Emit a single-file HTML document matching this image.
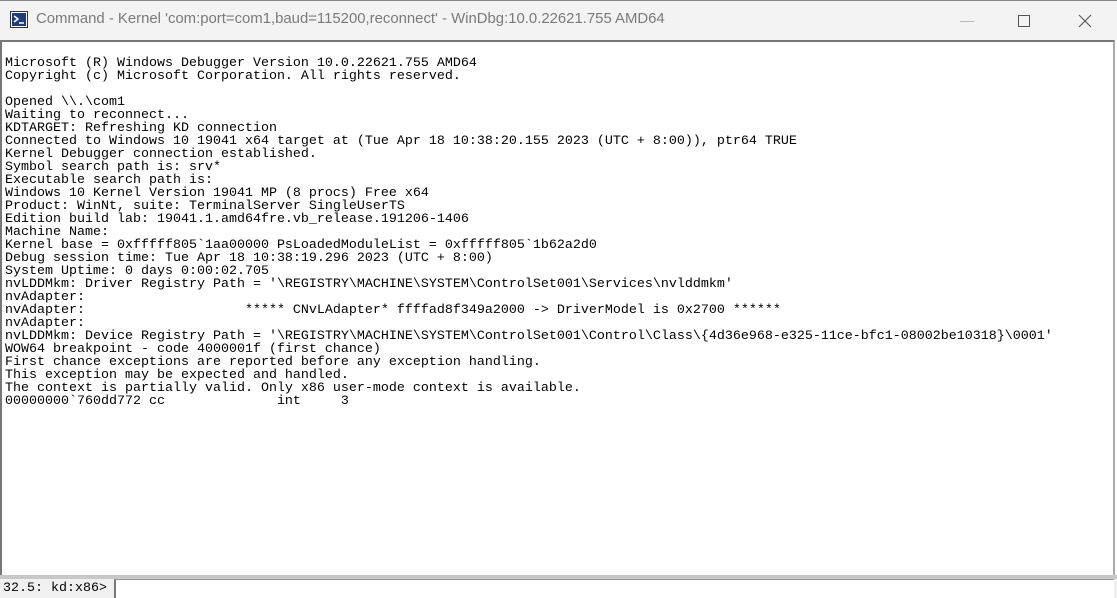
<!DOCTYPE html>
<html><head><style>
body{margin:0;width:1117px;height:598px;overflow:hidden;background:#fff;font-family:"Liberation Sans",sans-serif;position:relative}
#tb{position:absolute;left:0;top:0;width:1117px;height:40px;background:#f3f3f3;border-top:1px solid #888;box-sizing:border-box}
#title{position:absolute;left:36px;top:10px;font-size:14.9px;color:#7a7a7a;white-space:nowrap}
#ic{position:absolute;left:10px;top:10px;width:18px;height:17px;border:1px solid #333;background:#fff;box-sizing:border-box}
#ic svg{position:absolute;left:1px;top:1px}
#content{position:absolute;left:0;top:40px;width:1115px;height:535px;border-top:2px solid #777;border-left:2px solid #777;border-right:2px solid #aaa;box-sizing:border-box}
pre{position:absolute;left:5px;top:57px;margin:0;font-family:"Liberation Mono",monospace;font-size:13.33px;line-height:13px;color:#000}
#sep{position:absolute;left:0;top:575px;width:1117px;height:4px;background:#c8c8c8}
#sb{position:absolute;left:0;top:579px;width:1117px;height:19px;background:#f0f0f0}
#prompt{position:absolute;left:3px;top:581px;font-family:"Liberation Mono",monospace;font-size:13.33px;color:#000}
#inp{position:absolute;left:114px;top:579px;width:1000px;height:19px;background:#fff;border-left:2px solid #777;border-top:1px solid #999;box-sizing:border-box}
</style></head><body>
<div id="tb">
<div id="ic"><svg width="14" height="13"><rect width="14" height="13" fill="#1f3c78"/><path d="M2 3 L6 6 L2 9" stroke="#fff" stroke-width="1.6" fill="none"/><path d="M7 10 H12" stroke="#fff" stroke-width="1.5"/></svg></div>
<div id="title">Command - Kernel 'com:port=com1,baud=115200,reconnect' - WinDbg:10.0.22621.755 AMD64</div>
<svg style="position:absolute;left:955px;top:12px" width="150" height="16"><path d="M5 8.5H19" stroke="#bbb" stroke-width="1"/><rect x="63.5" y="2.5" width="11" height="11" fill="none" stroke="#555"/><path d="M124 2L136 14M136 2L124 14" stroke="#555" stroke-width="1.1"/></svg>
</div>
<div id="content"></div>
<pre>Microsoft (R) Windows Debugger Version 10.0.22621.755 AMD64
Copyright (c) Microsoft Corporation. All rights reserved.

Opened \\.\com1
Waiting to reconnect...
KDTARGET: Refreshing KD connection
Connected to Windows 10 19041 x64 target at (Tue Apr 18 10:38:20.155 2023 (UTC + 8:00)), ptr64 TRUE
Kernel Debugger connection established.
Symbol search path is: srv*
Executable search path is:
Windows 10 Kernel Version 19041 MP (8 procs) Free x64
Product: WinNt, suite: TerminalServer SingleUserTS
Edition build lab: 19041.1.amd64fre.vb_release.191206-1406
Machine Name:
Kernel base = 0xfffff805`1aa00000 PsLoadedModuleList = 0xfffff805`1b62a2d0
Debug session time: Tue Apr 18 10:38:19.296 2023 (UTC + 8:00)
System Uptime: 0 days 0:00:02.705
nvLDDMkm: Driver Registry Path = '\REGISTRY\MACHINE\SYSTEM\ControlSet001\Services\nvlddmkm'
nvAdapter:
nvAdapter:                    ***** CNvLAdapter* ffffad8f349a2000 -> DriverModel is 0x2700 ******
nvAdapter:
nvLDDMkm: Device Registry Path = '\REGISTRY\MACHINE\SYSTEM\ControlSet001\Control\Class\{4d36e968-e325-11ce-bfc1-08002be10318}\0001'
WOW64 breakpoint - code 4000001f (first chance)
First chance exceptions are reported before any exception handling.
This exception may be expected and handled.
The context is partially valid. Only x86 user-mode context is available.
00000000`760dd772 cc              int     3</pre>
<div id="sep"></div>
<div id="sb"></div>
<div id="prompt">32.5: kd:x86&gt;</div>
<div id="inp"></div>
</body></html>
